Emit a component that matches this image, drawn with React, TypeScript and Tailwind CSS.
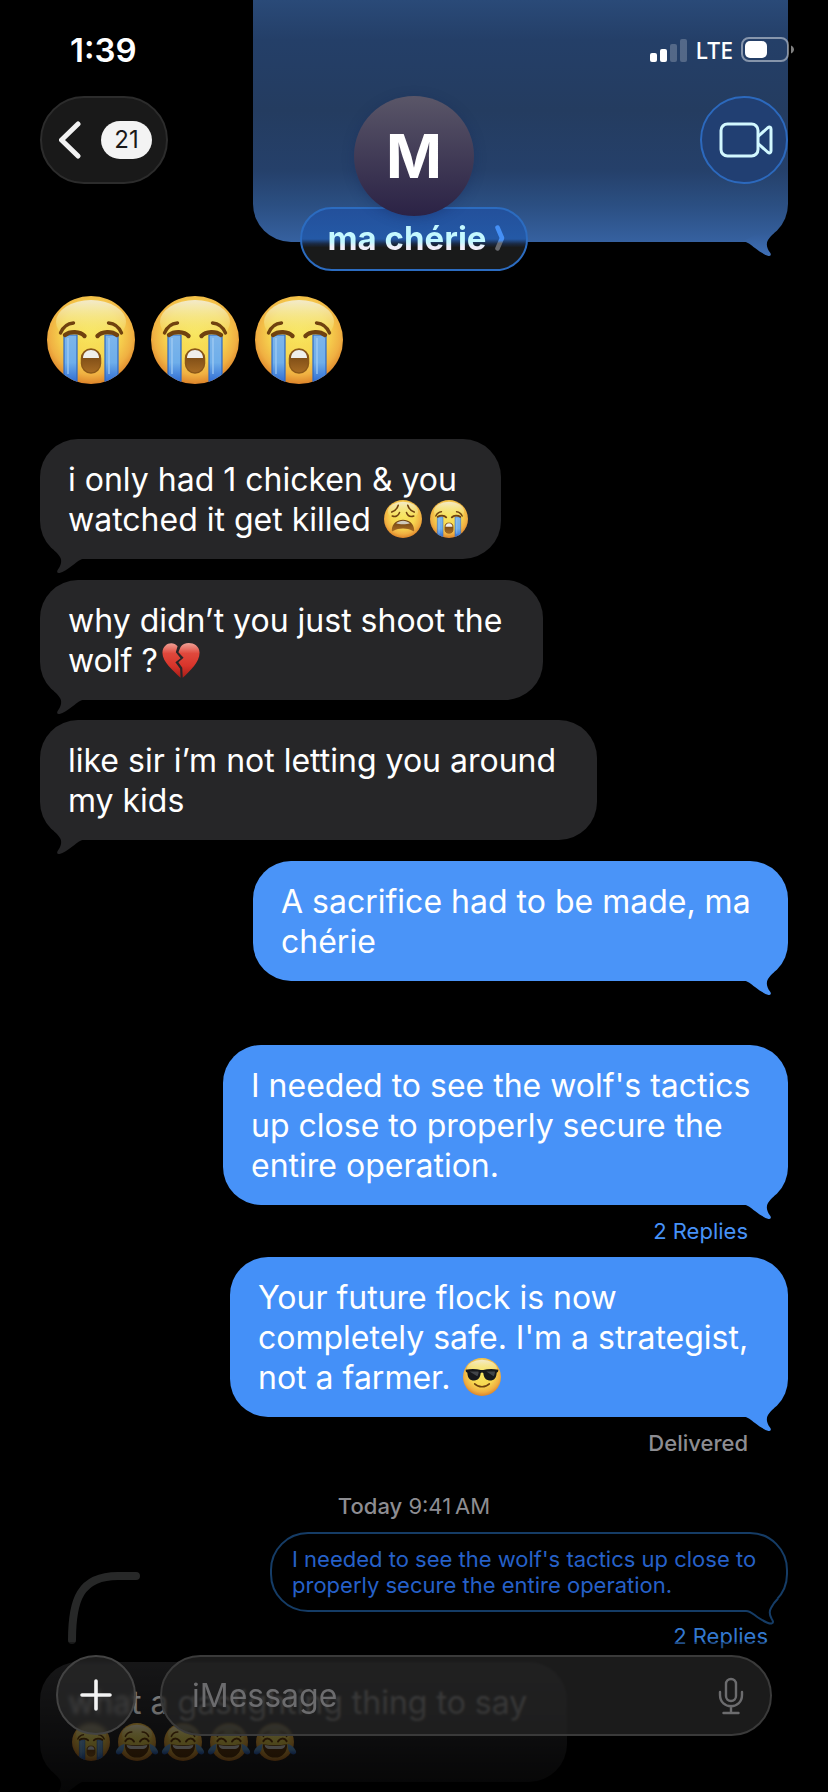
import { useId, type ReactNode } from "react";

type Side = "left" | "right";

function Face({ id }: { id: string }) {
  return (
    <>
      <defs>
        <radialGradient id={id} cx="50%" cy="42%" r="58%">
          <stop offset="0" stopColor="#f8e45c" />
          <stop offset="0.55" stopColor="#f7d650" />
          <stop offset="0.82" stopColor="#f0b042" />
          <stop offset="1" stopColor="#dd842a" />
        </radialGradient>
        <linearGradient id={id + "s"} x1="0" y1="0" x2="0" y2="1">
          <stop offset="0" stopColor="#f3ecd2" stopOpacity="0.95" />
          <stop offset="1" stopColor="#f8ee60" stopOpacity="0" />
        </linearGradient>
        <linearGradient id={id + "t"} x1="0" y1="0" x2="0" y2="1">
          <stop offset="0" stopColor="#7db5ea" />
          <stop offset="0.55" stopColor="#6eaeea" />
          <stop offset="1" stopColor="#2763cf" />
        </linearGradient>
        <linearGradient id={id + "m"} x1="0" y1="0" x2="0" y2="1">
          <stop offset="0" stopColor="#6b3f10" />
          <stop offset="1" stopColor="#a86c24" />
        </linearGradient>
        <clipPath id={id + "c"}>
          <circle cx="44" cy="44" r="44" />
        </clipPath>
      </defs>
      <circle cx="44" cy="44" r="44" fill={`url(#${id})`} />
      <ellipse cx="44" cy="26" rx="35" ry="22" fill={`url(#${id}s)`} />
    </>
  );
}

function Crying({ className }: { className: string }) {
  const id = useId();
  return (
    <svg viewBox="0 0 88 88" className={className} role="img" aria-label="loudly crying face">
      <Face id={id} />
      <g clipPath={`url(#${id}c)`}>
        <path d="M17 39h13v50H17zM58 39h13v50H58z" fill={`url(#${id}t)`} stroke="#2c68c4" strokeWidth="1.2" />
        <path d="M21 42v36M62 42v36" stroke="#a4cdf3" strokeWidth="2" opacity="0.6" />
      </g>
      <g fill="none" stroke="#70420f" strokeLinecap="round">
        <path d="M13.5 37C16 31 21 27.5 26.5 27M74.5 37C72 31 67 27.5 61.5 27" strokeWidth="3.4" />
        <path d="M18 39C23 35 33 35 37.5 40M70 39C65 35 55 35 50.5 40" strokeWidth="4.4" />
      </g>
      <rect x="34.5" y="53" width="19" height="24" rx="9.5" fill={`url(#${id}m)`} stroke="#8b5718" strokeWidth="1.5" />
      <path d="M36 62c0-5 3.500-8 8-8s8 3 8 8z" fill="#efefec" />
    </svg>
  );
}

function Weary({ className }: { className: string }) {
  const id = useId();
  return (
    <svg viewBox="0 0 88 88" className={className} role="img" aria-label="weary face">
      <Face id={id} />
      <g fill="none" stroke="#70420f" strokeWidth="3.6" strokeLinecap="round">
        <path d="M18 28C26 25 31 19 33 12M70 28C62 25 57 19 55 12" />
        <path d="M19 37C27 40 33 37 36 29M69 37C61 40 55 37 52 29" />
      </g>
      <path d="M18 70C19 54 31 46 44 46s25 8 26 24c0 3-2 3-4 1-12-7-32-7-44 0-2 2-4 2-4-1z" fill={`url(#${id}m)`} />
      <path d="M28 54c9-8 23-8 32 0-8 3-24 3-32 0z" fill="#cfc8bb" />
    </svg>
  );
}

function Cool({ className }: { className: string }) {
  const id = useId();
  return (
    <svg viewBox="0 0 88 88" className={className} role="img" aria-label="smiling face with sunglasses">
      <Face id={id} />
      <path d="M6 27c13-2 25-2 35 1h6c10-3 22-3 35-1l-1 5-3 2c-1 12-5 18-16 18-10 0-14-7-15-17-1-2-5-2-6 0-1 10-5 17-15 17-11 0-15-6-16-18l-3-2z" fill="#17181b" />
      <path d="M15 31h21c1 4-1 8-3 11zM54 31h20c0 4-1 8-3 11z" fill="#55585c" opacity="0.7" />
      <path d="M27 60c9 9 25 9 34 0" fill="none" stroke="#70420f" strokeWidth="3.6" strokeLinecap="round" />
    </svg>
  );
}

function Joy({ className }: { className: string }) {
  const id = useId();
  return (
    <svg viewBox="0 0 88 88" overflow="visible" className={className} role="img" aria-label="face with tears of joy">
      <Face id={id} />
      <g fill="none" stroke="#70420f" strokeWidth="3.6" strokeLinecap="round">
        <path d="M17 31C20 24 25 21 32 21M71 31C68 24 63 21 56 21" />
        <path d="M17 42c5-8 15-8 20 1M51 43c5-9 15-9 20-1" strokeWidth="4.5" />
      </g>
      <path d="M16 49c18 3 38 3 56 0 1 18-11 31-28 31S15 67 16 49z" fill="#6b3f10" />
      <path d="M20 51c16 3 32 3 48 0-1 7-6 9-10 9H30c-4 0-9-2-10-9z" fill="#f0ece6" />
      <path d="M15 48C4 52-4 60-5 67c0 7 10 8 15 1 4-6 5-13 5-20zM73 48c11 4 19 12 20 19 0 7-10 8-15 1-4-6-5-13-5-20z" fill={`url(#${id}t)`} />
    </svg>
  );
}

function BrokenHeart({ className }: { className: string }) {
  const id = useId();
  return (
    <svg viewBox="0 0 88 88" className={className} role="img" aria-label="broken heart">
      <defs>
        <linearGradient id={id} x1="0" y1="0" x2="0" y2="1">
          <stop offset="0" stopColor="#f0a196" />
          <stop offset="0.3" stopColor="#e0483c" />
          <stop offset="0.65" stopColor="#d8352b" />
          <stop offset="1" stopColor="#a81d18" />
        </linearGradient>
      </defs>
      <path d="M36 12C26-1 2 4 1 27c0 22 26 42 42 58l-1-21-11-15 12-9-11-14z" fill={`url(#${id})`} />
      <path d="M43 14C52-1 86 2 87 27c0 22-22 42-39 58l-1-23-9-13 12-10-12-13z" fill={`url(#${id})`} />
    </svg>
  );
}

const inlineEmoji = "mx-1 inline-block size-[38px] align-[-7px]";

function Tail({ side, className }: { side: Side; className: string }) {
  const place = side === "right" ? "right-0" : "left-0 -scale-x-100";
  const id = useId();
  return (
    <svg viewBox="0 0 48 32" aria-hidden="true" className={`absolute -bottom-4 h-8 w-12 ${place} ${className}`}>
      <defs>
        <linearGradient id={id} x1="0" y1="0" x2="0" y2="32" gradientUnits="userSpaceOnUse">
          <stop offset="0.2" stopColor="var(--tail-top, currentColor)" />
          <stop offset="0.95" stopColor="currentColor" />
        </linearGradient>
      </defs>
      <path
        d="M3 15.500C8 16 11 19 15 22 20 26 25 29 28.500 30 31 30.500 31.500 28.500 30 26.500 26.500 22 26 17 28 14 29.500 11.500 31.500 9.500 34 7L20 6Z"
        fill={`url(#${id})`}
      />
    </svg>
  );
}

function Bubble({ side, tone, tail, className, children }: { side: Side; tone: string; tail: string; className: string; children?: ReactNode }) {
  return (
    <li className={`relative max-w-full rounded-[38px] px-7 pt-[21px] pb-[19px] ${side === "right" ? "self-end" : "self-start"} ${tone} ${className}`}>
      <Tail side={side} className={tail} />
      <p className="relative whitespace-nowrap">{children}</p>
    </li>
  );
}

const caption = "flex h-[52px] items-center text-[22px] leading-7";

export default function App() {
  return (
    <div className="relative h-screen overflow-hidden bg-black font-['Inter',sans-serif] text-white">
      <ul className="flex flex-col px-10 text-[32px] leading-10">
        <Bubble
          side="right"
          tone="rounded-t-none bg-[linear-gradient(to_bottom,#2a4a78_0px,#243f68_40px,#243c60_110px,#25406a_170px,#2b4f82_205px,#3661a0_242px)]"
          tail="text-[#3f70b8] [--tail-top:#335c98]"
          className="h-[242px] w-[535px]"
        />
        <li className="mt-[54px] flex gap-4 pl-[7px]">
          <Crying className="size-[88px]" />
          <Crying className="size-[88px]" />
          <Crying className="size-[88px]" />
        </li>
        <Bubble side="left" tone="bg-[#262628]" tail="text-[#262628]" className="mt-[55px] w-[461px]">
          i only had 1 chicken &amp; you
          <br />
          watched it get killed <Weary className={inlineEmoji} />
          <Crying className={inlineEmoji} />
        </Bubble>
        <Bubble side="left" tone="bg-[#262628]" tail="text-[#262628]" className="mt-[21px] w-[503px]">
          why didn’t you just shoot the
          <br />
          wolf ?<BrokenHeart className={inlineEmoji} />
        </Bubble>
        <Bubble side="left" tone="bg-[#262628]" tail="text-[#262628]" className="mt-5 w-[557px]">
          like sir i’m not letting you around
          <br />
          my kids
        </Bubble>
        <Bubble side="right" tone="bg-[#4a94f8]" tail="text-[#4a94f8]" className="mt-[21px] w-[535px]">
          A sacrifice had to be made, ma
          <br />
          chérie
        </Bubble>
        <Bubble side="right" tone="bg-[#4792f8]" tail="text-[#4792f8]" className="mt-16 w-[565px]">
          I needed to see the wolf's tactics
          <br />
          up close to properly secure the
          <br />
          entire operation.
        </Bubble>
        <li className={`${caption} self-end pr-10`}>
          <button type="button" className="text-[#4792f8]">2 Replies</button>
        </li>
        <Bubble side="right" tone="bg-[#4490f8]" tail="text-[#4490f8]" className="w-[558px]">
          Your future flock is now
          <br />
          completely safe. I'm a strategist,
          <br />
          not a farmer. <Cool className={inlineEmoji} />
        </Bubble>
        <li className={`${caption} self-end pr-10 font-medium text-[#8d8d92]`}>Delivered</li>
        <li className={`${caption} mt-[11px] justify-center text-[#8d8d92]`}>
          <span className="font-medium">Today</span>&nbsp;9:41&thinsp;AM
        </li>
        <li className="flex items-start justify-between pl-7">
          <svg viewBox="0 0 72 72" aria-hidden="true" className="mt-10 size-[72px]">
            <path d="M4 68C4 28 12 4 50 4h18" fill="none" stroke="#272828" strokeWidth="8" strokeLinecap="round" />
          </svg>
          <div className="flex flex-col items-end">
            <div className="relative h-20 w-[518px] rounded-[38px] border-2 border-[#153c66] px-5 py-3 text-[22px] leading-[26px] text-[#2660c8]">
              <svg viewBox="0 0 48 32" overflow="visible" aria-hidden="true" className="absolute -right-0.5 -bottom-[18px] h-8 w-12">
                <path d="M6 15C11 15 14 19 18 21.500 24 25.500 29 28 31.500 27.500 34 27 33 25 31.500 22.500 29 18 29 15.500 31 12 32.500 9 34.500 6 38 3L34 0 20 6 8 11Z" fill="#000" />
                <path d="M6 15C11 15 14 19 18 21.500 24 25.500 29 28 31.500 27.500 34 27 33 25 31.500 22.500 29 18 29 15.500 31 12 32.500 9 34.500 6 38 2.500" fill="none" stroke="#153c66" strokeWidth="2" />
              </svg>
              <p className="relative whitespace-nowrap">
                I needed to see the wolf's tactics up close to
                <br />
                properly secure the entire operation.
              </p>
            </div>
            <button type="button" className="mr-5 mb-0.5 h-12 text-[22px] leading-7 text-[#3378cf]">2 Replies</button>
          </div>
        </li>
        <Bubble side="left" tone="bg-[#262628]" tail="text-[#262628]" className="w-[527px]">
          what a gaslighting thing to say
          <br />
          <Crying className={inlineEmoji} />
          <Joy className={inlineEmoji} />
          <Joy className={inlineEmoji} />
          <Joy className={inlineEmoji} />
          <Joy className={inlineEmoji} />
        </Bubble>
      </ul>

      <header className="absolute inset-x-0 top-0">
        <div className="flex h-24 items-center justify-between pt-1 pr-[34px] pl-[70px]">
          <time className="text-[33px] leading-10 font-semibold">1:39</time>
          <div className="flex items-center gap-2">
            <svg viewBox="0 0 37 24" className="h-6 w-[37px]" role="img" aria-label="Signal, two of four bars">
              <g fill="#fff">
                <rect x="0" y="15" width="7" height="9" rx="2" />
                <rect x="10" y="11" width="7" height="13" rx="2" />
                <rect x="20" y="6" width="7" height="18" rx="2" opacity="0.22" />
                <rect x="30" y="1" width="7" height="23" rx="2" opacity="0.22" />
              </g>
            </svg>
            <span className="font-['Noto_Sans',sans-serif] text-[23px] leading-7 font-medium">LTE</span>
            <svg viewBox="0 0 53 26" className="h-[26px] w-[53px]" role="img" aria-label="Battery, half charged">
              <rect x="1" y="1" width="46" height="23" rx="7" fill="none" stroke="#fff" strokeOpacity="0.45" strokeWidth="2" />
              <rect x="4" y="4" width="22" height="17" rx="5" fill="#fff" />
              <path d="M50 8.500c4 2 4 6 0 8z" fill="#fff" opacity="0.5" />
            </svg>
          </div>
        </div>
        <div className="grid grid-cols-[1fr_auto_1fr] items-start px-10">
          <button type="button" aria-label="Back, 21 unread" className="flex h-[88px] w-32 items-center justify-between rounded-full border-2 border-[#2c2c2c] bg-[#191919] pr-[14px] pl-[17px]">
            <svg viewBox="0 0 22 38" aria-hidden="true" className="h-[38px] w-[22px]">
              <path d="M19 3 2.500 19 19 35" fill="none" stroke="#f2f2f2" strokeWidth="5" strokeLinecap="round" strokeLinejoin="round" />
            </svg>
            <span className="flex h-[38px] w-[51px] items-center justify-center rounded-full bg-[#f3f3f3] text-[24px] leading-7 text-[#191919]">21</span>
          </button>
          <div className="flex flex-col items-center">
            <div className="relative z-10 flex size-[120px] items-center justify-center rounded-full bg-linear-to-b from-[#5a5668] to-[#2b2245] text-[60px] leading-none font-bold shadow-[0_2px_12px_rgba(20,40,90,0.35)]">M</div>
            <button type="button" className="-mt-[9px] flex h-16 w-[228px] items-center justify-center gap-2 rounded-full border-2 border-[#2c6cc0] bg-[linear-gradient(to_bottom,#23509b_0%,#2459a6_50%,#1a2a44_58%,#191a1a_64%)] pb-0.5 pl-1">
              <span className="bg-[linear-gradient(to_bottom,#c4f8ff_60%,#f0eef8_72%)] bg-clip-text text-[33px] leading-10 font-bold text-transparent">ma chérie</span>
              <svg viewBox="0 0 10 26" aria-hidden="true" className="h-[26px] w-[10px]">
                <defs>
                  <linearGradient id="chevron" x1="0" y1="0" x2="0" y2="1">
                    <stop offset="0.6" stopColor="#4590f6" />
                    <stop offset="0.75" stopColor="#67696e" />
                  </linearGradient>
                </defs>
                <path d="M2.500 2.500 7 13 2.500 23.500" fill="none" stroke="url(#chevron)" strokeWidth="4.5" strokeLinecap="round" strokeLinejoin="round" />
              </svg>
            </button>
          </div>
          <button type="button" aria-label="Video call" className="flex size-[88px] items-center justify-center justify-self-end rounded-full border-2 border-[#2c69bd] bg-[#213f72] pl-1">
            <svg viewBox="0 0 54 36" aria-hidden="true" className="h-9 w-[54px]" fill="none" stroke="#d2f8ff" strokeWidth="3" strokeLinejoin="round">
              <rect x="2" y="2" width="37" height="32" rx="6.5" />
              <path d="M39 14.500 48.500 6C50.500 4.500 52 5 52 7v22c0 2-1.500 2.500-3.500 1L39 21.500" />
            </svg>
          </button>
        </div>
      </header>

      <form className="absolute inset-x-0 bottom-0 flex h-[150px] items-start gap-6 bg-linear-to-b from-black/35 to-black/85 pt-[13px] pr-14 pl-14" onSubmit={(e) => e.preventDefault()}>
        <button type="button" aria-label="Add attachment" className="flex size-20 shrink-0 items-center justify-center rounded-full border-2 border-[#434343] bg-[#292929]/70 backdrop-blur-[2px]">
          <svg viewBox="0 0 32 32" aria-hidden="true" className="size-8">
            <path d="M16 2v28M2 16h28" stroke="#f4f4f4" strokeWidth="3.6" strokeLinecap="round" />
          </svg>
        </button>
        <div className="flex h-[81px] min-w-0 grow items-center rounded-full border-2 border-[#3a3a3a] bg-[#242424]/75 pr-[25px] pl-[30px] backdrop-blur-[1px]">
          <input type="text" aria-label="iMessage" placeholder="iMessage" className="min-w-0 grow bg-transparent text-[32px] leading-10 outline-none placeholder:text-[#6c6c6e]" />
          <button type="button" aria-label="Dictate">
            <svg viewBox="0 0 28 38" aria-hidden="true" className="h-[38px] w-7" fill="none" stroke="#6c6c6e" strokeWidth="2.4" strokeLinecap="round">
              <rect x="9" y="2" width="10" height="22" rx="5" />
              <path d="M3 15v3c0 15 22 15 22 0v-3M14 29v7M6.500 36h15" />
            </svg>
          </button>
        </div>
      </form>
    </div>
  );
}
